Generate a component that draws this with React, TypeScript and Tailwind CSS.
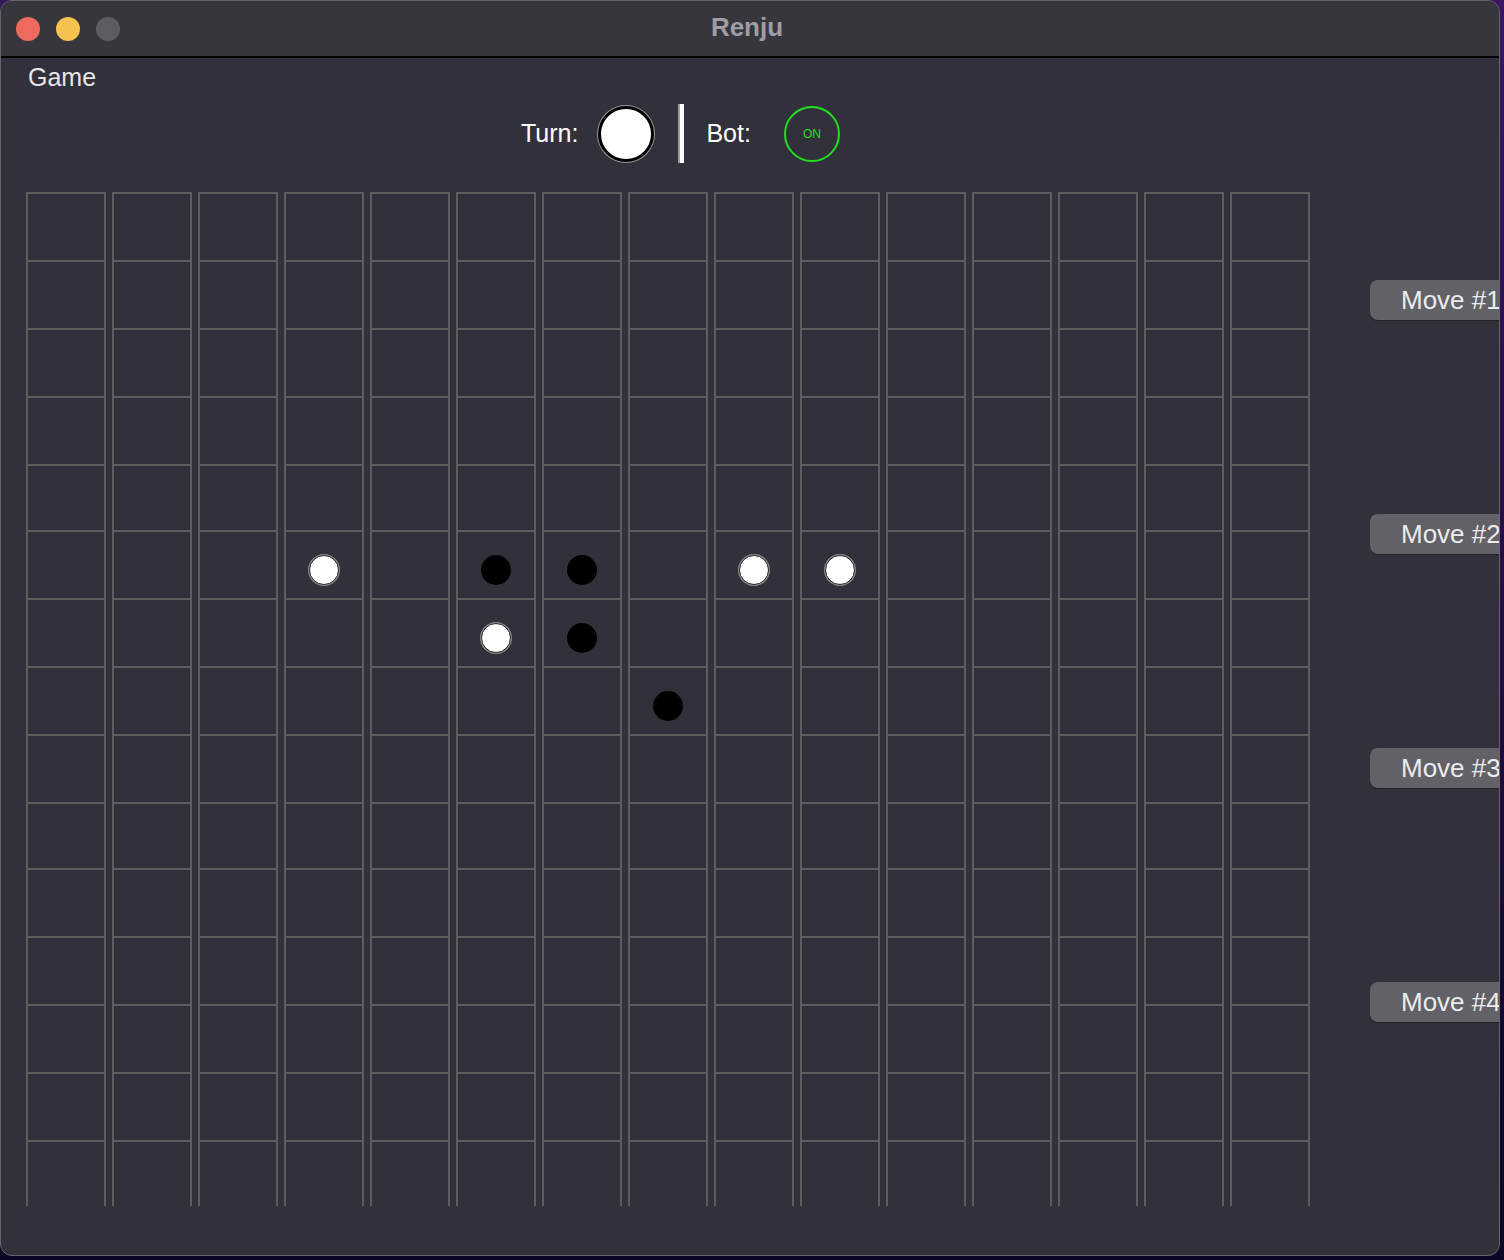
import React from "react";

const ROW_HEIGHTS = [68, 68, 68, 68, 66, 68, 68, 68, 68, 66, 68, 68, 68, 68, 66];
const COLS = 15;

// row-col -> stone colour
const stones: Record<string, "white" | "black"> = {
  "5-3": "white",
  "5-5": "black",
  "5-6": "black",
  "5-8": "white",
  "5-9": "white",
  "6-5": "white",
  "6-6": "black",
  "7-7": "black",
};

const Stone: React.FC<{ color: "white" | "black" }> = ({ color }) =>
  color === "white" ? (
    <div className="mt-[23px] h-[30px] w-[30px] rounded-full border border-[#222] bg-white shadow-[0_0_0_1px_#8a8a8a]" />
  ) : (
    <div className="mt-[23px] h-[30px] w-[30px] rounded-full bg-black" />
  );

const Column: React.FC<{ col: number }> = ({ col }) => (
  <div className="flex h-[1014px] w-[80px] flex-col overflow-hidden border-x-2 border-[#5d5d5d]">
    {ROW_HEIGHTS.map((h, row) => {
      const s = stones[`${row}-${col}`];
      return (
        <div
          key={row}
          className={`flex shrink-0 justify-center border-t-2 border-[#5d5d5d] ${
            h === 68 ? "h-[68px]" : "h-[66px]"
          }`}
        >
          {s && <Stone color={s} />}
        </div>
      );
    })}
  </div>
);

const MoveButton: React.FC<{ n: number }> = ({ n }) => (
  <button className="flex h-[40px] w-[164px] shrink-0 items-center justify-start rounded-[8px] bg-[#636168] pl-[31px] text-[26px] leading-none whitespace-nowrap text-[#ececec] shadow-[0_1px_1px_rgba(0,0,0,0.35)]">
    Move #{n}
  </button>
);

export default function App() {
  return (
    <div
      className="h-[1260px] w-[1504px] overflow-hidden bg-gradient-to-b from-[#3a1660] to-[#0c0524]"
      style={{ fontFamily: '"Liberation Sans", Arial, sans-serif' }}
    >
      <div className="flex h-[1256px] w-[1500px] flex-col overflow-hidden rounded-[12px] border border-[#66656a] bg-[#32303a]">
        {/* title bar */}
        <div className="relative flex h-[57px] shrink-0 items-center border-b-2 border-black bg-[#38363d] pl-[15px]">
          <div className="flex gap-[16px]">
            <div className="h-[24px] w-[24px] rounded-full bg-[#ee6a5f]" />
            <div className="h-[24px] w-[24px] rounded-full bg-[#f5c24f]" />
            <div className="h-[24px] w-[24px] rounded-full bg-[#5e5c63]" />
          </div>
          <div className="absolute inset-x-0 top-[11px] pr-[6px] text-center text-[26px] font-bold leading-[30px] text-[#9f9da4]">
            Renju
          </div>
        </div>

        {/* menu label */}
        <div className="pl-[27px] pt-[4px] text-[25px] leading-[30px] text-[#e6e6e6]">
          Game
        </div>

        {/* turn / bot toolbar */}
        <div className="mt-[12px] flex h-[59px] items-center pl-[520px] text-[25px] text-white">
          <span className="leading-none">Turn:</span>
          <div className="ml-[20px] h-[56px] w-[56px] rounded-full border-[3px] border-black bg-white shadow-[0_0_0_1px_#9a9a9a]" />
          <div className="ml-[24px] h-[59px] w-[6px] border-l-2 border-[#9c9c9c] bg-white" />
          <span className="ml-[22px] leading-none">Bot:</span>
          <div className="ml-[33px] flex h-[56px] w-[56px] items-center justify-center rounded-full border-2 border-[#1ee01e] text-[12px] leading-none text-[#1ee01e]">
            ON
          </div>
        </div>

        {/* board + moves */}
        <div className="mt-[29px] flex">
          <div className="ml-[25px] flex gap-[6px]">
            {Array.from({ length: COLS }, (_, c) => (
              <Column key={c} col={c} />
            ))}
          </div>
          <div className="ml-[60px] flex flex-col gap-[194px] pt-[88px]">
            {[1, 2, 3, 4].map((n) => (
              <MoveButton key={n} n={n} />
            ))}
          </div>
        </div>
      </div>
    </div>
  );
}
